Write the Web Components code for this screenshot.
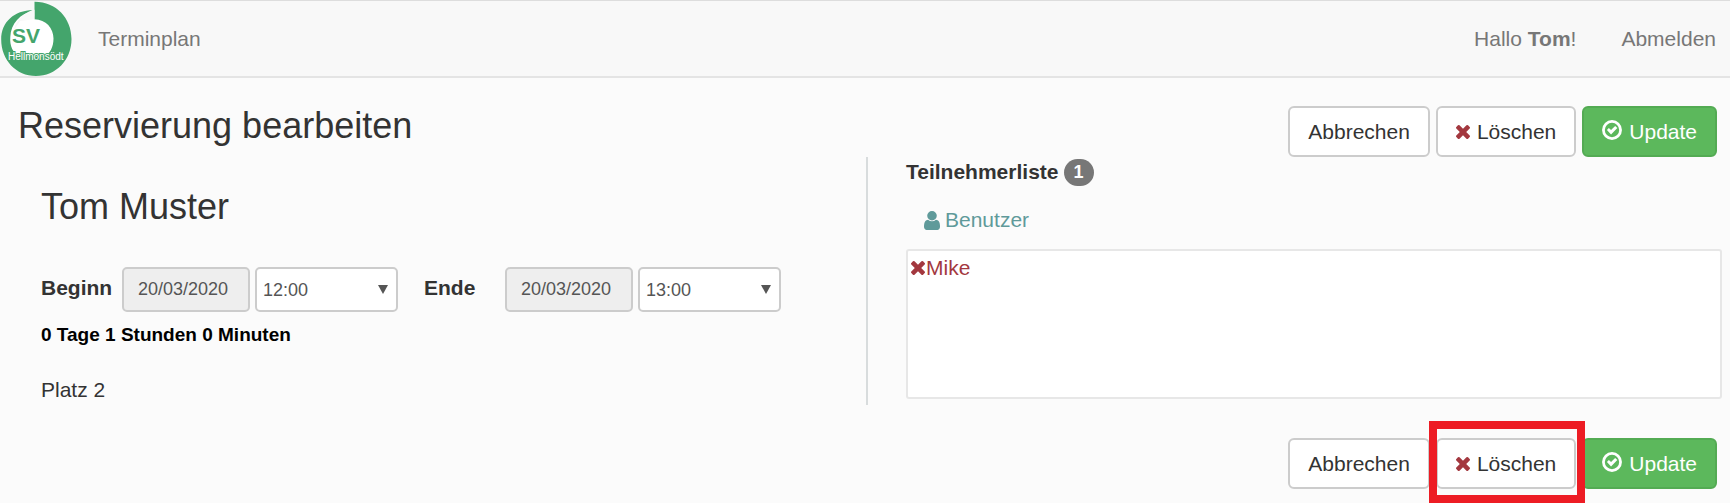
<!DOCTYPE html>
<html lang="de">
<head>
<meta charset="utf-8">
<meta name="viewport" content="width=device-width, initial-scale=1">
<title>Reservierung bearbeiten</title>
<style>
  body {
    margin: 0;
    background-color: #fbfbfb;
    color: #333;
    font-family: "Liberation Sans", Arial, sans-serif;
    font-size: 21px;
    line-height: 30px;
    --rot: #a3383f;
    --gruen: #5cb85c;
    --border: #ccc;
  }
</style>
</head>
<body>

<nav-bar></nav-bar>
<reservation-page></reservation-page>

<template id="tpl-icon">
  <style>
    :host { display: inline-block; line-height: 0; }
    svg { display: none; fill: currentColor; }
    :host([name="remove"]) .remove,
    :host([name="ok"]) .ok,
    :host([name="user"]) .user { display: block; }
  </style>
  <svg class="remove" width="14" height="14" viewBox="302 366 1188 1188" aria-hidden="true">
    <path d="M1490 1322q0 40-28 68l-136 136q-28 28-68 28t-68-28l-294-294-294 294q-28 28-68 28t-68-28l-136-136q-28-28-28-68t28-68l294-294-294-294q-28-28-28-68t28-68l136-136q28-28 68-28t68 28l294 294 294-294q28-28 68-28t68 28l136 136q28 28 28 68t-28 68l-294 294 294 294q28 28 28 68z"/>
  </svg>
  <svg class="ok" width="20" height="20" viewBox="0 0 21 21" aria-hidden="true">
    <circle cx="10.5" cy="10.5" r="9" fill="none" stroke="currentColor" stroke-width="2.900"/>
    <path d="M5.2 10.6l2-2.200 2.300 2 4.300-4.200 2.300 2.300-6.600 6.700z"/>
  </svg>
  <svg class="user" width="16" height="19" viewBox="256 128 1280 1536" preserveAspectRatio="none" aria-hidden="true">
    <path d="M1536 1399q0 109-62.5 187t-150.5 78h-854q-88 0-150.5-78t-62.5-187q0-85 8.5-160.5t31.5-152 58.5-131 94-89 134.5-34.5q131 128 313 128t313-128q76 0 134.5 34.5t94 89 58.5 131 31.5 152 8.5 160.5zm-256-887q0 159-112.5 271.5t-271.5 112.5-271.5-112.5-112.5-271.5 112.5-271.5 271.5-112.5 271.5 112.5 112.5 271.5z"/>
  </svg>
</template>

<template id="tpl-logo">
  <style>
    :host { display: block; line-height: 0; }
    text { font-family: "Liberation Sans", Arial, sans-serif; }
  </style>
  <svg width="72" height="75" viewBox="0 1 72 75" role="img" aria-label="Vereinslogo">
    <!-- Ring: links laeuft er als Sichel spitz zu -->
    <path fill="#44a56c" d="M34.500 1.700C56 1.500 71.500 18 71.500 39S56 76 36 76 1.200 60 1.200 39.500C1.200 22 14 10.500 33 10L34.500 19z"/>
    <path fill="#fff" d="M34.500 19.200C46 19.500 53.500 28 53.500 38.500 53.500 47 50 53 45 57H20C13 53 9.500 46 10.300 37 11 23 20 14 33 11z"/>
    <path fill="#f8f8f8" d="M33 9.800C22 14 15.500 22 13.500 31L20 21 34.500 19.200V9.800z"/>
    <text x="12" y="43" font-size="21" font-weight="bold" fill="#44a56c">SV</text>
    <text x="8" y="60" font-size="10" fill="#fff" stroke="#44a56c" stroke-width="2" paint-order="stroke">Hellmonsödt</text>
  </svg>
</template>

<template id="tpl-nav">
  <style>
    :host { display: block; }
    nav {
      display: flex;
      align-items: center;
      box-sizing: border-box;
      padding-right: 14px;
      background-color: #f8f8f8;
      border-top: 1px solid #ddd;
      border-bottom: 2px solid #e4e4e4;
    }
    a { color: #777; text-decoration: none; }
    a:hover { color: #333; }
    .links {
      display: flex;
      flex: 1;
      gap: 45px;
      margin-left: 26px;
    }
    .links span { color: #777; }
    .hallo { margin-left: auto; }
  </style>
  <nav>
    <a href="#"><club-logo></club-logo></a>
    <div class="links">
      <a href="#terminplan">Terminplan</a>
      <span class="hallo">Hallo <b>Tom</b>!</span>
      <a href="#abmelden">Abmelden</a>
    </div>
  </nav>
</template>

<template id="tpl-button">
  <style>
    :host { display: block; position: relative; }
    button {
      display: flex;
      align-items: center;
      gap: 7px;
      padding: 9px 18px;
      border: 2px solid var(--border);
      border-radius: 6px;
      background-color: #fff;
      color: #333;
      font: inherit;
      line-height: 29px;
      cursor: pointer;
    }
    ::slotted(ui-icon) { color: var(--rot); }
    :host([kind="success"]) button {
      background-color: var(--gruen);
      border-color: #53ab53;
      color: #fff;
    }
    :host([kind="success"]) ::slotted(ui-icon) { color: #fff; margin-bottom: 4px; }
    :host([marked])::after {
      content: "";
      position: absolute;
      z-index: 1;
      inset: -17px -9px -14px -7px;
      border: 8px solid #ed1c24;
      pointer-events: none;
    }
  </style>
  <button type="button"><slot name="icon"></slot><slot></slot></button>
</template>

<template id="tpl-actions">
  <style>
    :host { display: flex; justify-content: flex-end; gap: 6px; }
  </style>
  <ui-button>Abbrechen</ui-button>
  <ui-button class="delete"><ui-icon slot="icon" name="remove"></ui-icon>Löschen</ui-button>
  <ui-button kind="success"><ui-icon slot="icon" name="ok"></ui-icon>Update</ui-button>
</template>

<template id="tpl-datetime">
  <style>
    :host { display: flex; align-items: center; }
    label { width: 81px; padding-bottom: 3px; font-weight: bold; }
    input, select {
      box-sizing: border-box;
      height: 45px;
      margin: 0;
      border: 2px solid var(--border);
      border-radius: 5px;
      color: #555;
      font: inherit;
      font-size: 18px;
    }
    input {
      width: 128px;
      padding: 0 14px;
      background-color: #eee;
    }
    .time {
      display: grid;
      align-items: center;
      margin-left: 5px;
    }
    .time > * { grid-area: 1 / 1; }
    select {
      appearance: none;
      width: 143px;
      padding: 0 6px;
      background-color: #fff;
    }
    svg {
      justify-self: end;
      margin-right: 10px;
      fill: #555;
      pointer-events: none;
    }
  </style>
  <label for="date"><slot></slot></label>
  <input id="date" type="text" readonly>
  <div class="time">
    <select aria-label="Uhrzeit">
      <option>12:00</option>
      <option>13:00</option>
      <option>14:00</option>
    </select>
    <svg width="10" height="9" viewBox="0 0 10 9" aria-hidden="true"><path d="M0 0h10L5 9z"/></svg>
  </div>
</template>

<template id="tpl-participants">
  <style>
    :host { display: block; }
    h2 {
      display: flex;
      align-items: center;
      gap: 5px;
      margin: 0;
      font-size: 21px;
    }
    .badge {
      padding: 0 10px;
      border-radius: 14px;
      background-color: #777;
      color: #fff;
      font-size: 18px;
      line-height: 27px;
    }
    a {
      display: flex;
      align-items: center;
      text-decoration: none;
    }
    .user {
      gap: 5px;
      margin: 18px 0 14px 18px;
      color: #5f9a9a;
    }
    ul {
      min-height: 150px;
      box-sizing: border-box;
      margin: 0;
      padding: 2px 3px;
      border: 2px solid #e7e7e7;
      border-radius: 3px;
      background-color: #fff;
      list-style: none;
    }
    li a { gap: 1px; color: var(--rot); }
  </style>
  <h2>Teilnehmerliste <span class="badge">1</span></h2>
  <a class="user" href="#benutzer"><ui-icon name="user"></ui-icon>Benutzer</a>
  <ul>
    <li><a href="#mike"><ui-icon name="remove"></ui-icon>Mike</a></li>
  </ul>
</template>

<template id="tpl-page">
  <style>
    :host { display: block; }
    header {
      display: flex;
      justify-content: space-between;
      align-items: flex-start;
      padding: 28px 13px 0 18px;
    }
    h1, h2 {
      margin: 0;
      font-size: 36px;
      font-weight: normal;
      line-height: 40px;
    }
    .columns {
      display: grid;
      grid-template-columns: 1fr 1fr;
      align-items: start;
      padding: 0 8px 0 10px;
    }
    .left { padding: 30px 0 0 31px; }
    .right {
      padding: 0 0 6px 38px;
      border-left: 2px solid #d8dcdd;
    }
    .times {
      display: flex;
      flex-wrap: wrap;
      gap: 26px;
      margin-top: 40px;
    }
    p { margin: 0; }
    .duration {
      margin-top: 8px;
      color: #000;
      font-size: 19px;
      font-weight: bold;
    }
    .court { margin-top: 25px; }
    footer { padding: 33px 13px 14px; }
  </style>
  <header>
    <h1>Reservierung bearbeiten</h1>
    <action-bar></action-bar>
  </header>
  <div class="columns">
    <div class="left">
      <h2>Tom Muster</h2>
      <div class="times">
        <date-time date="20/03/2020" time="12:00">Beginn</date-time>
        <date-time date="20/03/2020" time="13:00">Ende</date-time>
      </div>
      <p class="duration">0 Tage 1 Stunden 0 Minuten</p>
      <p class="court">Platz 2</p>
    </div>
    <participant-list class="right"></participant-list>
  </div>
  <footer><action-bar marked></action-bar></footer>
</template>

<script>
class BaseElement extends HTMLElement {
  constructor() {
    super();
    const shadow = this.attachShadow({ mode: "open" });
    const template = document.getElementById(this.constructor.template);
    shadow.appendChild(template.content.cloneNode(true));
  }
}

class UiIcon extends BaseElement {
  static template = "tpl-icon";
}

class ClubLogo extends BaseElement {
  static template = "tpl-logo";
}

class NavBar extends BaseElement {
  static template = "tpl-nav";
}

class UiButton extends BaseElement {
  static template = "tpl-button";
}

class ActionBar extends BaseElement {
  static template = "tpl-actions";

  connectedCallback() {
    this.shadowRoot.querySelector(".delete").toggleAttribute("marked", this.hasAttribute("marked"));
  }
}

class DateTime extends BaseElement {
  static template = "tpl-datetime";

  connectedCallback() {
    this.shadowRoot.querySelector("input").value = this.getAttribute("date");
    this.shadowRoot.querySelector("select").value = this.getAttribute("time");
  }
}

class ParticipantList extends BaseElement {
  static template = "tpl-participants";
}

class ReservationPage extends BaseElement {
  static template = "tpl-page";
}

customElements.define("ui-icon", UiIcon);
customElements.define("club-logo", ClubLogo);
customElements.define("nav-bar", NavBar);
customElements.define("ui-button", UiButton);
customElements.define("action-bar", ActionBar);
customElements.define("date-time", DateTime);
customElements.define("participant-list", ParticipantList);
customElements.define("reservation-page", ReservationPage);
</script>
</body>
</html>
